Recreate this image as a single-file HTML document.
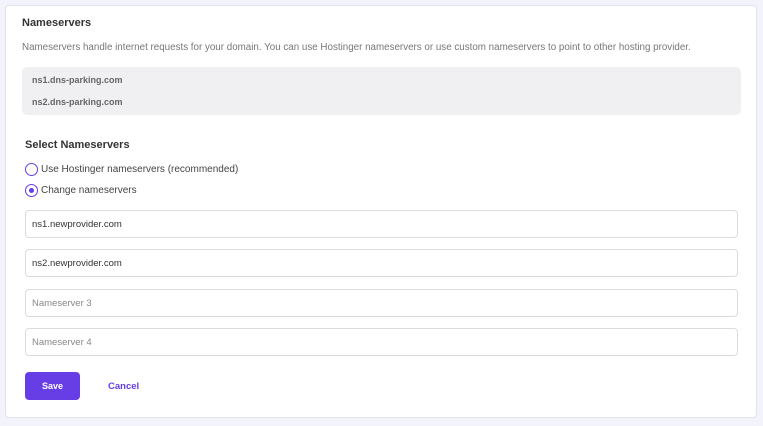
<!DOCTYPE html>
<html><head><style>
*{box-sizing:border-box;margin:0;padding:0}
body{width:763px;height:426px;background:#f2f3fb;font-family:"Liberation Sans",sans-serif;position:relative;overflow:hidden}
.card{position:absolute;left:5px;top:5px;width:752px;height:413px;background:#fff;border:1px solid #e3e3ee;border-radius:4px}
.a{position:absolute;white-space:nowrap}
.h{left:22px;top:17px;font-size:11px;font-weight:bold;color:#333}
.d{left:22px;top:42px;font-size:9.8px;color:#777}
.gray{position:absolute;left:22px;top:67px;width:719px;height:48px;background:#f0f0f3;border-radius:5px}
.ns{font-size:9px;font-weight:bold;color:#666;left:32px}
.sel{left:25px;top:139px;font-size:11px;font-weight:bold;color:#333}
.r{left:25px;width:13px;height:13px;border:1.5px solid #673de6;border-radius:50%}
.rl{left:41px;font-size:10px;color:#444}
.in{position:absolute;left:25px;width:713px;height:28px;border:1px solid #dadce0;border-radius:4px;font-size:9.5px;padding:8px 0 0 6px;color:#333}
.ph{color:#888}
.save{position:absolute;left:25px;top:372px;width:55px;height:28px;background:#673de6;border-radius:4px;color:#fff;font-size:9px;font-weight:bold;text-align:center;line-height:28px}
.cancel{left:108px;top:381px;font-size:9.5px;font-weight:bold;color:#673de6}
</style></head><body>
<div class="card"></div>
<div class="a h">Nameservers</div>
<div class="a d">Nameservers handle internet requests for your domain. You can use Hostinger nameservers or use custom nameservers to point to other hosting provider.</div>
<div class="gray"></div>
<div class="a ns" style="top:75px">ns1.dns-parking.com</div>
<div class="a ns" style="top:97px">ns2.dns-parking.com</div>
<div class="a sel">Select Nameservers</div>
<div class="a r" style="top:163px"></div>
<div class="a rl" style="top:164px">Use Hostinger nameservers (recommended)</div>
<div class="a r" style="top:184px"><div style="position:absolute;left:2.5px;top:2.5px;width:5px;height:5px;border-radius:50%;background:#673de6"></div></div>
<div class="a rl" style="top:185px">Change nameservers</div>
<div class="in" style="top:210px">ns1.newprovider.com</div>
<div class="in" style="top:249px">ns2.newprovider.com</div>
<div class="in ph" style="top:289px">Nameserver 3</div>
<div class="in ph" style="top:328px">Nameserver 4</div>
<div class="save">Save</div>
<div class="a cancel">Cancel</div>
</body></html>
